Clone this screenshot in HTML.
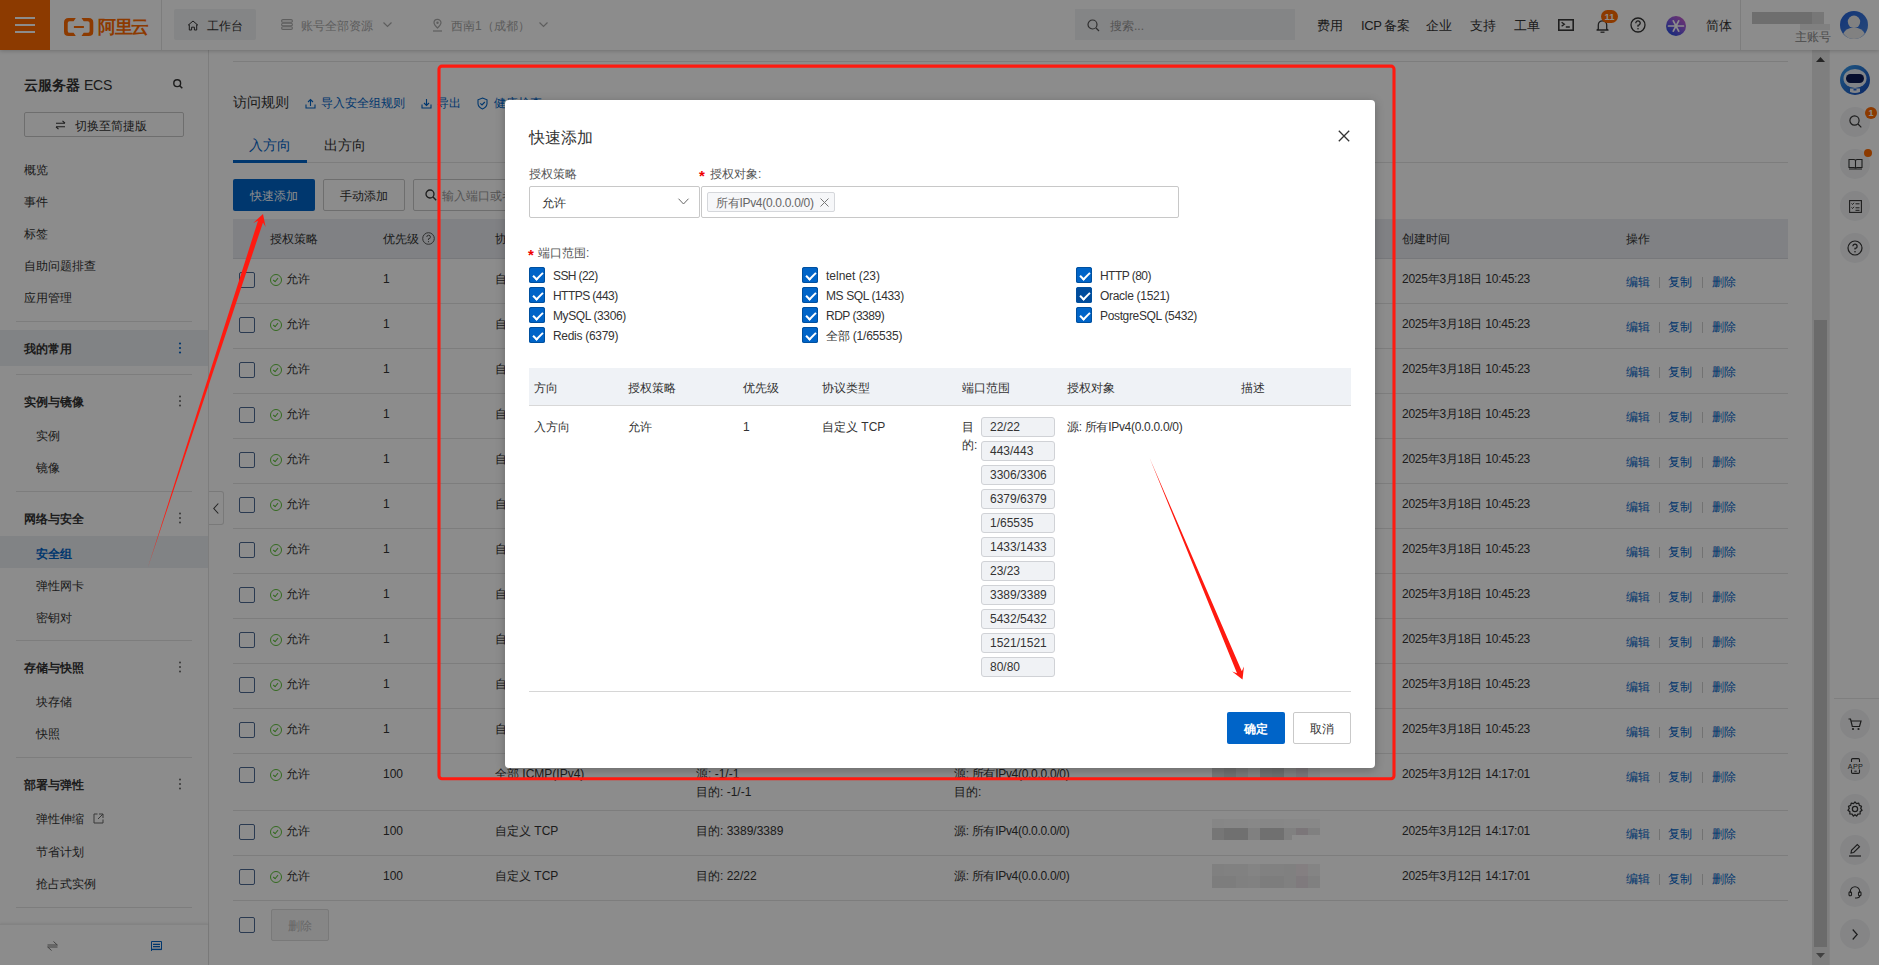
<!DOCTYPE html>
<html><head><meta charset="utf-8">
<style>
*{margin:0;padding:0;box-sizing:border-box}
html,body{width:1879px;height:965px;overflow:hidden;background:#fff;font-family:"Liberation Sans",sans-serif;font-size:12px;line-height:12px;color:#333;position:relative}
.a{position:absolute;white-space:nowrap}
.f13{font-size:13px;line-height:13px}
.f14{font-size:14px;line-height:14px}
.f16{font-size:16px;line-height:16px}
.b{font-weight:bold}
.m{font-weight:bold}
.blue{color:#0064c8}
.hl{position:absolute;height:1px;background:#e3e3e3}
.vl{position:absolute;width:1px;background:#e3e3e3}
svg{position:absolute;overflow:visible}
.cb{position:absolute;width:16px;height:16px;border:1px solid #4d6a94;border-radius:2px;background:#fff}
.ok{position:absolute;width:12px;height:12px;border:1.2px solid #5fc23a;border-radius:50%}
.ok:after{content:"";position:absolute;left:3.3px;top:2px;width:2.3px;height:4.3px;border:solid #5fc23a;border-width:0 1.1px 1.1px 0;transform:rotate(40deg)}
.rc{position:absolute;left:1840px;width:30px;height:30px;border-radius:50%;background:#f2f3f5}
#ov{position:absolute;z-index:3;left:0;top:0;width:1879px;height:965px;background:rgba(0,0,0,.45)}
#modal{position:absolute;z-index:4;left:505px;top:100px;width:870px;height:668px;background:#fff;border-radius:4px;box-shadow:0 2px 10px rgba(0,0,0,.25)}
.mcb{position:absolute;width:16px;height:16px;background:#0064c8;border-radius:2.5px;box-shadow:inset 0 0 0 1px #00509f}
.mcb:after{content:"";position:absolute;left:5.6px;top:2.6px;width:4px;height:8px;border:solid #fff;border-width:0 2px 2px 0;transform:rotate(45deg)}
.pt{position:absolute;left:476px;width:74px;height:20px;border:1px solid #d0d2d6;border-radius:3px;background:#f0f2f5;font-size:12px;line-height:19px;padding-left:8px;color:#333}
</style></head><body>

<!-- ============ TOP BAR ============ -->
<div id="top" class="a" style="left:0;top:0;width:1879px;height:50px;background:#fff;box-shadow:0 1px 4px rgba(0,0,0,.2);z-index:2">
  <div class="a" style="left:0;top:0;width:50px;height:50px;background:#ff6a00"></div>
  <div class="a" style="left:15px;top:17px;width:20px;height:2px;background:#fff"></div>
  <div class="a" style="left:15px;top:24px;width:20px;height:2px;background:#fff"></div>
  <div class="a" style="left:15px;top:31px;width:20px;height:2px;background:#fff"></div>
  <svg style="left:64px;top:18px" width="30" height="18" viewBox="0 0 30 18"><path d="M11.8,0 L4.6,0 Q0,0 0,4.6 L0,13.4 Q0,18 4.6,18 L11.8,18 L9.6,14.8 L5.6,14.8 Q3.7,14.8 3.7,12.9 L3.7,5.1 Q3.7,3.2 5.6,3.2 L9.6,3.2 Z" fill="#ff6a00"/><path d="M 17.5,0 L 24.7,0 Q 29.3,0 29.3,4.6 L 29.3,13.4 Q 29.3,18 24.7,18 L 17.5,18 L 19.7,14.8 L 23.7,14.8 Q 25.6,14.8 25.6,12.9 L 25.6,5.1 Q 25.6,3.2 23.7,3.2 L 19.7,3.2 Z" fill="#ff6a00"/><rect x="9.9" y="8" width="10" height="2" fill="#ff6a00"/></svg>
  <div class="a b" style="left:98px;top:18px;font-size:18px;line-height:18px;color:#ff6a00;letter-spacing:-1.3px">阿里云</div>
  <div class="vl" style="left:161px;top:0;height:50px"></div>
  <div class="a" style="left:174px;top:9px;width:82px;height:31px;background:#f1f2f4;border-radius:2px"></div>
  <svg style="left:187px;top:20px" width="12" height="11" viewBox="0 0 12 11"><path d="M1 5.3L6 1L11 5.3M2.3 4.5V10H4.6V7.2H7.4V10H9.7V4.5" fill="none" stroke="#333" stroke-width="1"/></svg>
  <div class="a" style="left:207px;top:20px;color:#333">工作台</div>
  <svg style="left:281px;top:19px" width="12" height="11" viewBox="0 0 12 11"><rect x=".6" y=".6" width="10.8" height="2.6" rx="1.3" fill="none" stroke="#acacac" stroke-width="1.1"/><rect x=".6" y="4.2" width="10.8" height="2.6" rx="1.3" fill="none" stroke="#acacac" stroke-width="1.1"/><rect x=".6" y="7.8" width="10.8" height="2.6" rx="1.3" fill="none" stroke="#acacac" stroke-width="1.1"/></svg>
  <div class="a" style="left:301px;top:20px;color:#a9a9a9">账号全部资源</div>
  <svg style="left:383px;top:22px" width="9" height="6" viewBox="0 0 9 6"><path d="M.5.5L4.5 4.5L8.5.5" fill="none" stroke="#acacac" stroke-width="1.2"/></svg>
  <svg style="left:432px;top:19px" width="11" height="13" viewBox="0 0 11 13"><path d="M5.5 9C3 6.5 2 5 2 3.8A3.5 3.5 0 0 1 9 3.8C9 5 8 6.5 5.5 9Z" fill="none" stroke="#acacac" stroke-width="1.2"/><circle cx="5.5" cy="3.8" r="1.2" fill="#acacac"/><path d="M1 12h9" stroke="#acacac" stroke-width="1.2"/></svg>
  <div class="a" style="left:451px;top:20px;color:#a9a9a9">西南1（成都）</div>
  <svg style="left:539px;top:22px" width="9" height="6" viewBox="0 0 9 6"><path d="M.5.5L4.5 4.5L8.5.5" fill="none" stroke="#acacac" stroke-width="1.2"/></svg>

  <div class="a" style="left:1075px;top:9px;width:220px;height:31px;background:#f1f2f4"></div>
  <svg style="left:1087px;top:19px" width="13" height="13" viewBox="0 0 13 13"><circle cx="5.5" cy="5.5" r="4.5" fill="none" stroke="#555" stroke-width="1.2"/><path d="M9 9l3 3" stroke="#555" stroke-width="1.2"/></svg>
  <div class="a" style="left:1110px;top:20px;color:#999">搜索...</div>

  <div class="a f13" style="left:1317px;top:19px">费用</div>
  <div class="a f13" style="left:1361px;top:19px;letter-spacing:-.4px">ICP 备案</div>
  <div class="a f13" style="left:1426px;top:19px">企业</div>
  <div class="a f13" style="left:1470px;top:19px">支持</div>
  <div class="a f13" style="left:1514px;top:19px">工单</div>
  <svg style="left:1558px;top:19px" width="16" height="12" viewBox="0 0 16 12"><rect x=".8" y=".8" width="14.4" height="10.4" fill="none" stroke="#3a3a3a" stroke-width="1.6"/><path d="M3.6 3.3L6.3 5.3L3.6 7.3M7.8 8H11.8" fill="none" stroke="#3a3a3a" stroke-width="1.4"/></svg>
  <svg style="left:1596px;top:17px" width="13" height="17" viewBox="0 0 13 17"><path d="M2.3 12V8A4.2 4.2 0 0 1 10.7 8V12L12 13H1Z" fill="none" stroke="#3a3a3a" stroke-width="1.3" stroke-linejoin="round"/><path d="M4.5 15.2H8.5" stroke="#3a3a3a" stroke-width="1.3"/></svg>
  <div class="a" style="left:1601px;top:9.5px;width:17px;height:13px;border-radius:7px;background:#ff6a00;color:#fff;font-size:9.5px;line-height:13px;text-align:center;font-weight:bold">11</div>
  <svg style="left:1630px;top:17px" width="16" height="16" viewBox="0 0 16 16"><circle cx="8" cy="8" r="7" fill="none" stroke="#333" stroke-width="1.3"/><path d="M5.8 6.2A2.2 2.2 0 1 1 8 8.3V9.8" fill="none" stroke="#333" stroke-width="1.3"/><circle cx="8" cy="11.8" r=".8" fill="#333"/></svg>
  <svg style="left:1666px;top:16px" width="20" height="20" viewBox="0 0 20 20"><defs><linearGradient id="pg" x1="1" y1="0" x2="0.2" y2="1"><stop offset="0" stop-color="#d45cc8"/><stop offset=".5" stop-color="#8a5ae0"/><stop offset="1" stop-color="#1f4be0"/></linearGradient></defs><circle cx="10" cy="10" r="10" fill="url(#pg)"/><path d="M2.5 10H17.5M7.3 4.8L12.7 15.2M12.7 4.8L7.3 15.2" stroke="#fff" stroke-width="1.7" stroke-linecap="round"/></svg>
  <div class="a f13" style="left:1706px;top:19px">简体</div>
  <div class="vl" style="left:1740px;top:0;height:50px"></div>
  <div class="a" style="left:1752px;top:12px;width:60px;height:12px;background:#c9c9c9"></div><div class="a" style="left:1812px;top:12px;width:12px;height:12px;background:#d9d9d9"></div><div class="a" style="left:1800px;top:24px;width:30px;height:6px;background:#eaeaea"></div>
  
  <div class="a" style="left:1795px;top:31px;color:#888">主账号</div>
  <svg style="left:1840px;top:11px" width="28" height="28" viewBox="0 0 28 28"><defs><linearGradient id="av" x1="0" y1="0" x2="1" y2="1"><stop offset="0" stop-color="#2160d8"/><stop offset="1" stop-color="#4a86e0"/></linearGradient></defs><circle cx="14" cy="14" r="14" fill="url(#av)"/><circle cx="14" cy="10.8" r="6.2" fill="#ececec"/><path d="M3.3 22.5Q6 16.8 14 16.8Q22 16.8 24.7 22.5Q20.5 28 14 28Q7.5 28 3.3 22.5Z" fill="#ececec"/></svg>
</div>

<!-- ============ SIDEBAR ============ -->
<div id="side" class="a" style="left:0;top:50px;width:209px;height:915px;background:#fff;border-right:1px solid #e3e3e3"></div>
<div class="a f14" style="left:24px;top:78px;"><span class="m">云服务器</span> <span style="letter-spacing:-.2px">ECS</span></div>
<svg style="left:173px;top:79px" width="10" height="10" viewBox="0 0 10 10"><circle cx="4.2" cy="4.2" r="3.4" fill="none" stroke="#333" stroke-width="1.4"/><path d="M6.7 6.7L9.3 9.3" stroke="#333" stroke-width="1.5"/></svg>
<div class="a" style="left:24px;top:112px;width:160px;height:25px;border:1px solid #c9c9c9;border-radius:2px"></div>
<svg style="left:55px;top:120px" width="11" height="10" viewBox="0 0 11 10"><path d="M1 3.2H10M7.5 .8L10 3.2M10 6.8H1M3.5 9.2L1 6.8" fill="none" stroke="#333" stroke-width="1.1"/></svg>
<div class="a " style="left:75px;top:120px;">切换至简捷版</div>
<div class="a " style="left:24px;top:164px;">概览</div>
<div class="a " style="left:24px;top:196px;">事件</div>
<div class="a " style="left:24px;top:228px;">标签</div>
<div class="a " style="left:24px;top:260px;">自助问题排查</div>
<div class="a " style="left:24px;top:292px;">应用管理</div>
<div class="hl" style="left:16px;top:321px;width:176px"></div>
<div class="hl" style="left:16px;top:374px;width:176px"></div>
<div class="hl" style="left:16px;top:491px;width:176px"></div>
<div class="hl" style="left:16px;top:640px;width:176px"></div>
<div class="hl" style="left:16px;top:757px;width:176px"></div>
<div class="hl" style="left:16px;top:907px;width:176px"></div>
<div class="a" style="left:0;top:330px;width:208px;height:36px;background:#eceef2"></div>
<div class="a" style="left:0;top:536px;width:208px;height:32px;background:#eceef2"></div>
<div class="a m" style="left:24px;top:343px;">我的常用</div>
<svg style="left:178px;top:342px" width="4" height="12" viewBox="0 0 4 12"><circle cx="2" cy="1.5" r="1.1" fill="#0064c8"/><circle cx="2" cy="6" r="1.1" fill="#0064c8"/><circle cx="2" cy="10.5" r="1.1" fill="#0064c8"/></svg>
<div class="a m" style="left:24px;top:396px;">实例与镜像</div>
<svg style="left:178px;top:395px" width="4" height="12" viewBox="0 0 4 12"><circle cx="2" cy="1.5" r="1" fill="#666"/><circle cx="2" cy="6" r="1" fill="#666"/><circle cx="2" cy="10.5" r="1" fill="#666"/></svg>
<div class="a " style="left:36px;top:430px;">实例</div>
<div class="a " style="left:36px;top:462px;">镜像</div>
<div class="a m" style="left:24px;top:513px;">网络与安全</div>
<svg style="left:178px;top:512px" width="4" height="12" viewBox="0 0 4 12"><circle cx="2" cy="1.5" r="1" fill="#666"/><circle cx="2" cy="6" r="1" fill="#666"/><circle cx="2" cy="10.5" r="1" fill="#666"/></svg>
<div class="a m blue" style="left:36px;top:548px;">安全组</div>
<div class="a " style="left:36px;top:580px;">弹性网卡</div>
<div class="a " style="left:36px;top:612px;">密钥对</div>
<div class="a m" style="left:24px;top:662px;">存储与快照</div>
<svg style="left:178px;top:661px" width="4" height="12" viewBox="0 0 4 12"><circle cx="2" cy="1.5" r="1" fill="#666"/><circle cx="2" cy="6" r="1" fill="#666"/><circle cx="2" cy="10.5" r="1" fill="#666"/></svg>
<div class="a " style="left:36px;top:696px;">块存储</div>
<div class="a " style="left:36px;top:728px;">快照</div>
<div class="a m" style="left:24px;top:779px;">部署与弹性</div>
<svg style="left:178px;top:778px" width="4" height="12" viewBox="0 0 4 12"><circle cx="2" cy="1.5" r="1" fill="#666"/><circle cx="2" cy="6" r="1" fill="#666"/><circle cx="2" cy="10.5" r="1" fill="#666"/></svg>
<div class="a " style="left:36px;top:813px;">弹性伸缩</div>
<svg style="left:93px;top:813px" width="11" height="11" viewBox="0 0 11 11"><path d="M4.5 1H1V10H10V6.5M6 1H10V5M10 1L5 6" fill="none" stroke="#666" stroke-width="1"/></svg>
<div class="a " style="left:36px;top:846px;">节省计划</div>
<div class="a " style="left:36px;top:878px;">抢占式实例</div>
<div class="a" style="left:0;top:924px;width:208px;height:41px;background:#fff;box-shadow:0 -1px 2px rgba(0,0,0,.08);border-top:1px solid #eee"></div>
<svg style="left:47px;top:941px" width="11" height="10" viewBox="0 0 11 10"><path d="M.5 4H10.5M6.5 .5L10.3 4M10.5 6H.5M4.5 9.5L.7 6" fill="none" stroke="#777" stroke-width="1"/></svg>
<svg style="left:151px;top:941px" width="11" height="10" viewBox="0 0 11 10"><path d="M.5 10V.5H10.5V8.6H1" fill="none" stroke="#0064c8" stroke-width="1"/><path d="M2 3.4H9M2 5.6H9M1 8.3H10.5" stroke="#0064c8" stroke-width="1.2"/></svg>
<div class="a" style="left:209px;top:491px;width:15px;height:34px;background:#fff;border:1px solid #dcdcdc;border-left:none;border-radius:0 3px 3px 0"></div>
<svg style="left:213px;top:503px" width="6" height="11" viewBox="0 0 6 11"><path d="M5.3.5L.8 5.5L5.3 10.5" fill="none" stroke="#444" stroke-width="1.1"/></svg>

<!-- ============ MAIN ============ -->
<div class="hl" style="left:233px;top:61px;width:1555px"></div>
<div class="a f14" style="left:233px;top:95px;">访问规则</div>
<svg style="left:305px;top:98px" width="11" height="11" viewBox="0 0 11 11"><path d="M1 6.5V10H10V6.5M5.5 8V1.5M3 4L5.5 1.5L8 4" fill="none" stroke="#0064c8" stroke-width="1.1"/></svg>
<div class="a blue" style="left:321px;top:97px;">导入安全组规则</div>
<svg style="left:421px;top:98px" width="11" height="11" viewBox="0 0 11 11"><path d="M1 6.5V10H10V6.5M5.5 1V7.5M3 5L5.5 7.5L8 5" fill="none" stroke="#0064c8" stroke-width="1.1"/></svg>
<div class="a blue" style="left:437px;top:97px;">导出</div>
<svg style="left:477px;top:97px" width="11" height="13" viewBox="0 0 11 13"><path d="M5.5 1L10 2.8V6.5Q10 10 5.5 12Q1 10 1 6.5V2.8Z" fill="none" stroke="#0064c8" stroke-width="1.1"/><path d="M3.3 6.3L5 8L7.8 5" fill="none" stroke="#0064c8" stroke-width="1.1"/></svg>
<div class="a blue" style="left:494px;top:97px;">健康检查</div>
<div class="a f14 blue" style="left:249px;top:138px;">入方向</div>
<div class="a f14" style="left:324px;top:138px;">出方向</div>
<div class="hl" style="left:233px;top:162px;width:1555px"></div>
<div class="a" style="left:233px;top:160px;width:74px;height:3px;background:#0064c8"></div>
<div class="a" style="left:233px;top:179px;width:82px;height:32px;background:#0064c8;border-radius:2px"></div>
<div class="a " style="left:250px;top:190px;color:#fff">快速添加</div>
<div class="a" style="left:323px;top:179px;width:82px;height:32px;border:1px solid #c9c9c9;border-radius:2px"></div>
<div class="a " style="left:340px;top:190px;">手动添加</div>
<div class="a" style="left:413px;top:179px;width:300px;height:32px;border:1px solid #c9c9c9;border-radius:2px"></div>
<svg style="left:425px;top:189px" width="12" height="12" viewBox="0 0 12 12"><circle cx="5" cy="5" r="4" fill="none" stroke="#333" stroke-width="1.3"/><path d="M8 8l3.2 3.2" stroke="#333" stroke-width="1.4"/></svg>
<div class="a " style="left:442px;top:190px;color:#999">输入端口或者授权对象进行搜索</div>
<div class="a" style="left:233px;top:219px;width:1555px;height:40px;background:#e9ecf1;border-bottom:1px solid #d9dbe0"></div>
<div class="a " style="left:270px;top:233px;">授权策略</div>
<div class="a " style="left:383px;top:233px;">优先级</div>
<svg style="left:422px;top:232px" width="13" height="13" viewBox="0 0 13 13"><circle cx="6.5" cy="6.5" r="5.8" fill="none" stroke="#555" stroke-width="1"/><path d="M4.8 5A1.8 1.8 0 1 1 6.5 6.8V8" fill="none" stroke="#555" stroke-width="1"/><circle cx="6.5" cy="9.7" r=".6" fill="#555"/></svg>
<div class="a " style="left:495px;top:233px;">协议类型</div>
<div class="a " style="left:696px;top:233px;">端口范围</div>
<div class="a " style="left:954px;top:233px;">授权对象</div>
<div class="a " style="left:1212px;top:233px;">描述</div>
<div class="a " style="left:1402px;top:233px;">创建时间</div>
<div class="a " style="left:1626px;top:233px;">操作</div>
<div class="hl" style="left:233px;top:303px;width:1555px"></div>
<div class="cb" style="left:239px;top:272px"></div>
<div class="ok" style="left:270px;top:274px"></div>
<div class="a " style="left:286px;top:273px;">允许</div>
<div class="a " style="left:383px;top:273px;">1</div>
<div class="a " style="left:495px;top:273px;">自定义 TCP</div>
<div class="a " style="left:1402px;top:273px;letter-spacing:-.25px">2025年3月18日 10:45:23</div>
<div class="a blue" style="left:1626px;top:276px">编辑</div><div class="a" style="left:1659px;top:277px;width:1px;height:11px;background:#d0d0d0"></div><div class="a blue" style="left:1668px;top:276px">复制</div><div class="a" style="left:1702px;top:277px;width:1px;height:11px;background:#d0d0d0"></div><div class="a blue" style="left:1712px;top:276px">删除</div>
<div class="hl" style="left:233px;top:348px;width:1555px"></div>
<div class="cb" style="left:239px;top:317px"></div>
<div class="ok" style="left:270px;top:319px"></div>
<div class="a " style="left:286px;top:318px;">允许</div>
<div class="a " style="left:383px;top:318px;">1</div>
<div class="a " style="left:495px;top:318px;">自定义 TCP</div>
<div class="a " style="left:1402px;top:318px;letter-spacing:-.25px">2025年3月18日 10:45:23</div>
<div class="a blue" style="left:1626px;top:321px">编辑</div><div class="a" style="left:1659px;top:322px;width:1px;height:11px;background:#d0d0d0"></div><div class="a blue" style="left:1668px;top:321px">复制</div><div class="a" style="left:1702px;top:322px;width:1px;height:11px;background:#d0d0d0"></div><div class="a blue" style="left:1712px;top:321px">删除</div>
<div class="hl" style="left:233px;top:393px;width:1555px"></div>
<div class="cb" style="left:239px;top:362px"></div>
<div class="ok" style="left:270px;top:364px"></div>
<div class="a " style="left:286px;top:363px;">允许</div>
<div class="a " style="left:383px;top:363px;">1</div>
<div class="a " style="left:495px;top:363px;">自定义 TCP</div>
<div class="a " style="left:1402px;top:363px;letter-spacing:-.25px">2025年3月18日 10:45:23</div>
<div class="a blue" style="left:1626px;top:366px">编辑</div><div class="a" style="left:1659px;top:367px;width:1px;height:11px;background:#d0d0d0"></div><div class="a blue" style="left:1668px;top:366px">复制</div><div class="a" style="left:1702px;top:367px;width:1px;height:11px;background:#d0d0d0"></div><div class="a blue" style="left:1712px;top:366px">删除</div>
<div class="hl" style="left:233px;top:438px;width:1555px"></div>
<div class="cb" style="left:239px;top:407px"></div>
<div class="ok" style="left:270px;top:409px"></div>
<div class="a " style="left:286px;top:408px;">允许</div>
<div class="a " style="left:383px;top:408px;">1</div>
<div class="a " style="left:495px;top:408px;">自定义 TCP</div>
<div class="a " style="left:1402px;top:408px;letter-spacing:-.25px">2025年3月18日 10:45:23</div>
<div class="a blue" style="left:1626px;top:411px">编辑</div><div class="a" style="left:1659px;top:412px;width:1px;height:11px;background:#d0d0d0"></div><div class="a blue" style="left:1668px;top:411px">复制</div><div class="a" style="left:1702px;top:412px;width:1px;height:11px;background:#d0d0d0"></div><div class="a blue" style="left:1712px;top:411px">删除</div>
<div class="hl" style="left:233px;top:483px;width:1555px"></div>
<div class="cb" style="left:239px;top:452px"></div>
<div class="ok" style="left:270px;top:454px"></div>
<div class="a " style="left:286px;top:453px;">允许</div>
<div class="a " style="left:383px;top:453px;">1</div>
<div class="a " style="left:495px;top:453px;">自定义 TCP</div>
<div class="a " style="left:1402px;top:453px;letter-spacing:-.25px">2025年3月18日 10:45:23</div>
<div class="a blue" style="left:1626px;top:456px">编辑</div><div class="a" style="left:1659px;top:457px;width:1px;height:11px;background:#d0d0d0"></div><div class="a blue" style="left:1668px;top:456px">复制</div><div class="a" style="left:1702px;top:457px;width:1px;height:11px;background:#d0d0d0"></div><div class="a blue" style="left:1712px;top:456px">删除</div>
<div class="hl" style="left:233px;top:528px;width:1555px"></div>
<div class="cb" style="left:239px;top:497px"></div>
<div class="ok" style="left:270px;top:499px"></div>
<div class="a " style="left:286px;top:498px;">允许</div>
<div class="a " style="left:383px;top:498px;">1</div>
<div class="a " style="left:495px;top:498px;">自定义 TCP</div>
<div class="a " style="left:1402px;top:498px;letter-spacing:-.25px">2025年3月18日 10:45:23</div>
<div class="a blue" style="left:1626px;top:501px">编辑</div><div class="a" style="left:1659px;top:502px;width:1px;height:11px;background:#d0d0d0"></div><div class="a blue" style="left:1668px;top:501px">复制</div><div class="a" style="left:1702px;top:502px;width:1px;height:11px;background:#d0d0d0"></div><div class="a blue" style="left:1712px;top:501px">删除</div>
<div class="hl" style="left:233px;top:573px;width:1555px"></div>
<div class="cb" style="left:239px;top:542px"></div>
<div class="ok" style="left:270px;top:544px"></div>
<div class="a " style="left:286px;top:543px;">允许</div>
<div class="a " style="left:383px;top:543px;">1</div>
<div class="a " style="left:495px;top:543px;">自定义 TCP</div>
<div class="a " style="left:1402px;top:543px;letter-spacing:-.25px">2025年3月18日 10:45:23</div>
<div class="a blue" style="left:1626px;top:546px">编辑</div><div class="a" style="left:1659px;top:547px;width:1px;height:11px;background:#d0d0d0"></div><div class="a blue" style="left:1668px;top:546px">复制</div><div class="a" style="left:1702px;top:547px;width:1px;height:11px;background:#d0d0d0"></div><div class="a blue" style="left:1712px;top:546px">删除</div>
<div class="hl" style="left:233px;top:618px;width:1555px"></div>
<div class="cb" style="left:239px;top:587px"></div>
<div class="ok" style="left:270px;top:589px"></div>
<div class="a " style="left:286px;top:588px;">允许</div>
<div class="a " style="left:383px;top:588px;">1</div>
<div class="a " style="left:495px;top:588px;">自定义 TCP</div>
<div class="a " style="left:1402px;top:588px;letter-spacing:-.25px">2025年3月18日 10:45:23</div>
<div class="a blue" style="left:1626px;top:591px">编辑</div><div class="a" style="left:1659px;top:592px;width:1px;height:11px;background:#d0d0d0"></div><div class="a blue" style="left:1668px;top:591px">复制</div><div class="a" style="left:1702px;top:592px;width:1px;height:11px;background:#d0d0d0"></div><div class="a blue" style="left:1712px;top:591px">删除</div>
<div class="hl" style="left:233px;top:663px;width:1555px"></div>
<div class="cb" style="left:239px;top:632px"></div>
<div class="ok" style="left:270px;top:634px"></div>
<div class="a " style="left:286px;top:633px;">允许</div>
<div class="a " style="left:383px;top:633px;">1</div>
<div class="a " style="left:495px;top:633px;">自定义 TCP</div>
<div class="a " style="left:1402px;top:633px;letter-spacing:-.25px">2025年3月18日 10:45:23</div>
<div class="a blue" style="left:1626px;top:636px">编辑</div><div class="a" style="left:1659px;top:637px;width:1px;height:11px;background:#d0d0d0"></div><div class="a blue" style="left:1668px;top:636px">复制</div><div class="a" style="left:1702px;top:637px;width:1px;height:11px;background:#d0d0d0"></div><div class="a blue" style="left:1712px;top:636px">删除</div>
<div class="hl" style="left:233px;top:708px;width:1555px"></div>
<div class="cb" style="left:239px;top:677px"></div>
<div class="ok" style="left:270px;top:679px"></div>
<div class="a " style="left:286px;top:678px;">允许</div>
<div class="a " style="left:383px;top:678px;">1</div>
<div class="a " style="left:495px;top:678px;">自定义 TCP</div>
<div class="a " style="left:1402px;top:678px;letter-spacing:-.25px">2025年3月18日 10:45:23</div>
<div class="a blue" style="left:1626px;top:681px">编辑</div><div class="a" style="left:1659px;top:682px;width:1px;height:11px;background:#d0d0d0"></div><div class="a blue" style="left:1668px;top:681px">复制</div><div class="a" style="left:1702px;top:682px;width:1px;height:11px;background:#d0d0d0"></div><div class="a blue" style="left:1712px;top:681px">删除</div>
<div class="hl" style="left:233px;top:753px;width:1555px"></div>
<div class="cb" style="left:239px;top:722px"></div>
<div class="ok" style="left:270px;top:724px"></div>
<div class="a " style="left:286px;top:723px;">允许</div>
<div class="a " style="left:383px;top:723px;">1</div>
<div class="a " style="left:495px;top:723px;">自定义 TCP</div>
<div class="a " style="left:1402px;top:723px;letter-spacing:-.25px">2025年3月18日 10:45:23</div>
<div class="a blue" style="left:1626px;top:726px">编辑</div><div class="a" style="left:1659px;top:727px;width:1px;height:11px;background:#d0d0d0"></div><div class="a blue" style="left:1668px;top:726px">复制</div><div class="a" style="left:1702px;top:727px;width:1px;height:11px;background:#d0d0d0"></div><div class="a blue" style="left:1712px;top:726px">删除</div>
<div class="hl" style="left:233px;top:810px;width:1555px"></div>
<div class="cb" style="left:239px;top:767px"></div>
<div class="ok" style="left:270px;top:769px"></div>
<div class="a " style="left:286px;top:768px;">允许</div>
<div class="a " style="left:383px;top:768px;">100</div>
<div class="a " style="left:495px;top:768px;">全部 ICMP(IPv4)</div>
<div class="a " style="left:696px;top:768px;">源: -1/-1</div>
<div class="a " style="left:696px;top:786px;">目的: -1/-1</div>
<div class="a " style="left:954px;top:768px;letter-spacing:-.3px">源: 所有IPv4(0.0.0.0/0)</div>
<div class="a " style="left:954px;top:786px;">目的:</div>
<div class="a " style="left:1402px;top:768px;letter-spacing:-.25px">2025年3月12日 14:17:01</div>
<div class="a blue" style="left:1626px;top:771px">编辑</div><div class="a" style="left:1659px;top:772px;width:1px;height:11px;background:#d0d0d0"></div><div class="a blue" style="left:1668px;top:771px">复制</div><div class="a" style="left:1702px;top:772px;width:1px;height:11px;background:#d0d0d0"></div><div class="a blue" style="left:1712px;top:771px">删除</div>
<div class="a" style="left:1212px;top:765px;width:12px;height:13px;background:rgb(215,215,215)"></div><div class="a" style="left:1224px;top:765px;width:12px;height:13px;background:rgb(204,204,204)"></div><div class="a" style="left:1236px;top:765px;width:12px;height:13px;background:rgb(218,218,218)"></div><div class="a" style="left:1248px;top:765px;width:12px;height:13px;background:rgb(236,236,236)"></div><div class="a" style="left:1260px;top:765px;width:12px;height:13px;background:rgb(204,204,204)"></div><div class="a" style="left:1272px;top:765px;width:12px;height:13px;background:rgb(200,200,200)"></div><div class="a" style="left:1284px;top:765px;width:12px;height:13px;background:rgb(227,227,227)"></div><div class="a" style="left:1296px;top:765px;width:12px;height:13px;background:rgb(222,214,218)"></div><div class="a" style="left:1308px;top:765px;width:12px;height:13px;background:rgb(245,245,245)"></div><div class="a" style="left:1212px;top:819px;width:12px;height:9px;background:rgb(245,245,245)"></div><div class="a" style="left:1224px;top:819px;width:12px;height:9px;background:rgb(246,246,246)"></div><div class="a" style="left:1236px;top:819px;width:12px;height:9px;background:rgb(246,246,246)"></div><div class="a" style="left:1248px;top:819px;width:12px;height:9px;background:rgb(247,247,247)"></div><div class="a" style="left:1260px;top:819px;width:12px;height:9px;background:rgb(246,246,246)"></div><div class="a" style="left:1272px;top:819px;width:12px;height:9px;background:rgb(246,246,246)"></div><div class="a" style="left:1284px;top:819px;width:12px;height:9px;background:rgb(247,247,247)"></div><div class="a" style="left:1296px;top:819px;width:12px;height:9px;background:rgb(247,247,247)"></div><div class="a" style="left:1308px;top:819px;width:12px;height:9px;background:rgb(248,248,248)"></div><div class="a" style="left:1212px;top:828px;width:12px;height:12px;background:rgb(215,215,215)"></div><div class="a" style="left:1224px;top:828px;width:12px;height:12px;background:rgb(205,205,205)"></div><div class="a" style="left:1236px;top:828px;width:12px;height:12px;background:rgb(205,205,205)"></div><div class="a" style="left:1248px;top:828px;width:12px;height:12px;background:rgb(233,233,233)"></div><div class="a" style="left:1260px;top:828px;width:12px;height:12px;background:rgb(205,205,205)"></div><div class="a" style="left:1272px;top:828px;width:12px;height:12px;background:rgb(204,204,204)"></div><div class="a" style="left:1284px;top:828px;width:12px;height:12px;background:rgb(233,233,233)"></div><div class="a" style="left:1292px;top:835px;width:6px;height:5px;background:#fff"></div><div class="a" style="left:1296px;top:828px;width:12px;height:7px;background:rgb(224,216,220)"></div><div class="a" style="left:1308px;top:828px;width:12px;height:7px;background:rgb(233,233,233)"></div><div class="a" style="left:1212px;top:864px;width:12px;height:12px;background:rgb(233,233,233)"></div><div class="a" style="left:1224px;top:864px;width:12px;height:12px;background:rgb(236,236,236)"></div><div class="a" style="left:1236px;top:864px;width:12px;height:12px;background:rgb(236,236,236)"></div><div class="a" style="left:1248px;top:864px;width:12px;height:12px;background:rgb(240,240,240)"></div><div class="a" style="left:1260px;top:864px;width:12px;height:12px;background:rgb(236,236,236)"></div><div class="a" style="left:1272px;top:864px;width:12px;height:12px;background:rgb(236,236,236)"></div><div class="a" style="left:1284px;top:864px;width:12px;height:12px;background:rgb(233,233,233)"></div><div class="a" style="left:1296px;top:864px;width:12px;height:12px;background:rgb(240,232,236)"></div><div class="a" style="left:1308px;top:864px;width:12px;height:12px;background:rgb(240,240,240)"></div><div class="a" style="left:1212px;top:876px;width:12px;height:12px;background:rgb(227,227,227)"></div><div class="a" style="left:1224px;top:876px;width:12px;height:12px;background:rgb(227,227,227)"></div><div class="a" style="left:1236px;top:876px;width:12px;height:12px;background:rgb(233,233,233)"></div><div class="a" style="left:1248px;top:876px;width:12px;height:12px;background:rgb(236,236,236)"></div><div class="a" style="left:1260px;top:876px;width:12px;height:12px;background:rgb(227,227,227)"></div><div class="a" style="left:1272px;top:876px;width:12px;height:12px;background:rgb(227,227,227)"></div><div class="a" style="left:1284px;top:876px;width:12px;height:12px;background:rgb(233,233,233)"></div><div class="a" style="left:1296px;top:876px;width:12px;height:12px;background:rgb(231,223,227)"></div><div class="a" style="left:1308px;top:876px;width:12px;height:12px;background:rgb(233,233,233)"></div>
<div class="hl" style="left:233px;top:855px;width:1555px"></div>
<div class="cb" style="left:239px;top:824px"></div>
<div class="ok" style="left:270px;top:826px"></div>
<div class="a " style="left:286px;top:825px;">允许</div>
<div class="a " style="left:383px;top:825px;">100</div>
<div class="a " style="left:495px;top:825px;">自定义 TCP</div>
<div class="a " style="left:696px;top:825px;">目的: 3389/3389</div>
<div class="a " style="left:954px;top:825px;letter-spacing:-.3px">源: 所有IPv4(0.0.0.0/0)</div>
<div class="a " style="left:1402px;top:825px;letter-spacing:-.25px">2025年3月12日 14:17:01</div>
<div class="a blue" style="left:1626px;top:828px">编辑</div><div class="a" style="left:1659px;top:829px;width:1px;height:11px;background:#d0d0d0"></div><div class="a blue" style="left:1668px;top:828px">复制</div><div class="a" style="left:1702px;top:829px;width:1px;height:11px;background:#d0d0d0"></div><div class="a blue" style="left:1712px;top:828px">删除</div>
<div class="hl" style="left:233px;top:900px;width:1555px"></div>
<div class="cb" style="left:239px;top:869px"></div>
<div class="ok" style="left:270px;top:871px"></div>
<div class="a " style="left:286px;top:870px;">允许</div>
<div class="a " style="left:383px;top:870px;">100</div>
<div class="a " style="left:495px;top:870px;">自定义 TCP</div>
<div class="a " style="left:696px;top:870px;">目的: 22/22</div>
<div class="a " style="left:954px;top:870px;letter-spacing:-.3px">源: 所有IPv4(0.0.0.0/0)</div>
<div class="a " style="left:1402px;top:870px;letter-spacing:-.25px">2025年3月12日 14:17:01</div>
<div class="a blue" style="left:1626px;top:873px">编辑</div><div class="a" style="left:1659px;top:874px;width:1px;height:11px;background:#d0d0d0"></div><div class="a blue" style="left:1668px;top:873px">复制</div><div class="a" style="left:1702px;top:874px;width:1px;height:11px;background:#d0d0d0"></div><div class="a blue" style="left:1712px;top:873px">删除</div>


<div class="cb" style="left:239px;top:917px"></div>
<div class="a" style="left:271px;top:909px;width:58px;height:32px;border:1px solid #dcdcdc;background:#f5f5f5;border-radius:2px"></div>
<div class="a " style="left:288px;top:920px;color:#bbb">删除</div>

<!-- ============ RIGHT COL ============ -->
<div class="a" style="left:1812px;top:50px;width:17px;height:915px;background:#e8e8e8"></div>
<div class="a" style="left:1814px;top:320px;width:13px;height:627px;background:#c4c4c4"></div>
<svg style="left:1816px;top:57px" width="9" height="5" viewBox="0 0 9 5"><path d="M0 5L4.5 0L9 5Z" fill="#444"/></svg>
<svg style="left:1816px;top:953px" width="9" height="5" viewBox="0 0 9 5"><path d="M0 0L4.5 5L9 0Z" fill="#777"/></svg>
<div class="a" style="left:1829px;top:50px;width:50px;height:915px;background:#fff;border-left:1px solid #eee"></div>
<svg style="left:1840px;top:65px" width="30" height="30" viewBox="0 0 30 30"><defs><linearGradient id="rg" x1="0" y1="0" x2="1" y2="1"><stop offset="0" stop-color="#3aa0f0"/><stop offset="1" stop-color="#1546b5"/></linearGradient></defs><circle cx="15" cy="15" r="15" fill="url(#rg)"/><ellipse cx="15" cy="13.5" rx="11.5" ry="9.5" fill="#e9eef6"/><rect x="6" y="9" width="18" height="9" rx="4.5" fill="#0c1a55"/><path d="M10 23.5h10v3.5Q15 29 10 27Z" fill="#eef2f8"/><rect x="13.5" y="24" width="3" height="1.5" fill="#2a6ad8"/></svg>
<div class="rc" style="top:107px"></div>
<div class="rc" style="top:149px"></div>
<div class="rc" style="top:191px"></div>
<div class="rc" style="top:233px"></div>
<div class="rc" style="top:709px"></div>
<div class="rc" style="top:751px"></div>
<div class="rc" style="top:794px"></div>
<div class="rc" style="top:835px"></div>
<div class="rc" style="top:877px"></div>
<div class="rc" style="top:919px"></div>
<svg style="left:1849px;top:115px" width="13" height="13" viewBox="0 0 13 13"><circle cx="5.5" cy="5.5" r="4.6" fill="none" stroke="#333" stroke-width="1.2"/><path d="M9 9l3.3 3.3" stroke="#333" stroke-width="1.2"/></svg>
<div class="a" style="left:1865px;top:107px;width:12px;height:12px;border-radius:50%;background:#ff6a00;color:#fff;font-size:9px;line-height:12px;text-align:center;font-weight:bold">1</div>
<svg style="left:1848px;top:158px" width="15" height="12" viewBox="0 0 15 12"><path d="M1 1.5H6Q7.5 1.5 7.5 3V10.5Q7.5 9.5 6 9.5H1ZM14 1.5H9Q7.5 1.5 7.5 3V10.5Q7.5 9.5 9 9.5H14Z" fill="none" stroke="#333" stroke-width="1.1"/><path d="M1 11H14" stroke="#333" stroke-width="1"/></svg>
<div class="a" style="left:1864px;top:149px;width:8px;height:8px;border-radius:50%;background:#ff6a00"></div>
<svg style="left:1849px;top:200px" width="13" height="13" viewBox="0 0 13 13"><rect x=".6" y=".6" width="11.8" height="11.8" fill="none" stroke="#333" stroke-width="1.1"/><path d="M2.5 3.5L3.5 4.5L5 2.8M6.5 3.8H10.5M2.5 7.5L3.5 8.5L5 6.8M6.5 7.8H10.5M6.5 10.3H10.5" fill="none" stroke="#333" stroke-width="1"/></svg>
<svg style="left:1847px;top:240px" width="16" height="16" viewBox="0 0 16 16"><circle cx="8" cy="8" r="7" fill="none" stroke="#333" stroke-width="1.2"/><path d="M5.9 6.2A2.1 2.1 0 1 1 8 8.3V9.6" fill="none" stroke="#333" stroke-width="1.2"/><circle cx="8" cy="11.7" r=".8" fill="#333"/></svg>
<div class="hl" style="left:1834px;top:698px;width:45px;background:#e8e8e8"></div>
<svg style="left:1848px;top:718px" width="14" height="13" viewBox="0 0 14 13"><path d="M.5 1H2.5L4.3 8.5H11.5L13 3H3.3" fill="none" stroke="#333" stroke-width="1.2"/><circle cx="5" cy="11" r="1.1" fill="#333"/><circle cx="10.5" cy="11" r="1.1" fill="#333"/></svg>
<svg style="left:1848px;top:758px" width="15" height="16" viewBox="0 0 15 16"><path d="M3.5 4V1.8Q3.5 .6 4.7 .6H10.3Q11.5 .6 11.5 1.8V4M3.5 11.5V14.2Q3.5 15.4 4.7 15.4H10.3Q11.5 15.4 11.5 14.2V11.5" fill="none" stroke="#333" stroke-width="1.1"/><text x="7.5" y="10.8" font-size="7.2" text-anchor="middle" fill="#333" font-family="Liberation Sans" letter-spacing=".3">APP</text><path d="M6.3 13.2H8.7" stroke="#333" stroke-width="1"/></svg>
<svg style="left:1847px;top:801px" width="16" height="16" viewBox="0 0 14 14"><path d="M7 .8L8.3 2.3L10.3 1.9L10.8 3.9L12.7 4.6L12 6.5L13.2 8.1L11.5 9.3L11.5 11.3L9.5 11.5L8.4 13.2L7 12L5.6 13.2L4.5 11.5L2.5 11.3L2.5 9.3L.8 8.1L2 6.5L1.3 4.6L3.2 3.9L3.7 1.9L5.7 2.3Z" fill="none" stroke="#333" stroke-width="1.1" stroke-linejoin="round"/><circle cx="7" cy="7" r="2.3" fill="none" stroke="#333" stroke-width="1.1"/></svg>
<svg style="left:1848px;top:843px" width="14" height="14" viewBox="0 0 14 14"><path d="M3 10L3.5 7.3L9.3 1.5L11.5 3.7L5.7 9.5Z" fill="none" stroke="#333" stroke-width="1.1"/><path d="M1 13H13" stroke="#333" stroke-width="1.2"/></svg>
<svg style="left:1848px;top:885px" width="14" height="14" viewBox="0 0 14 14"><path d="M2.3 8V6.5A4.7 4.7 0 0 1 11.7 6.5V8" fill="none" stroke="#333" stroke-width="1.1"/><rect x="1" y="6.8" width="2.5" height="4" rx="1" fill="none" stroke="#333" stroke-width="1.1"/><rect x="10.5" y="6.8" width="2.5" height="4" rx="1" fill="none" stroke="#333" stroke-width="1.1"/><path d="M11.7 10.8Q11.7 13 8.5 13H7" fill="none" stroke="#333" stroke-width="1.1"/></svg>
<svg style="left:1852px;top:929px" width="6" height="11" viewBox="0 0 6 11"><path d="M.7.5L5.2 5.5L.7 10.5" fill="none" stroke="#333" stroke-width="1.2"/></svg>

<div id="ov"></div>

<!-- ============ MODAL ============ -->
<div id="modal">
<div class="a f16" style="left:24px;top:30px;">快速添加</div>
<svg style="left:833px;top:30px" width="12" height="12" viewBox="0 0 12 12"><path d="M.8.8L11.2 11.2M11.2.8L.8 11.2" stroke="#333" stroke-width="1.3"/></svg>
<div class="a " style="left:24px;top:68px;color:#555">授权策略</div>
<div class="a" style="left:24px;top:86px;width:171px;height:32px;border:1px solid #c8c8c8;border-radius:2px"></div>
<div class="a " style="left:37px;top:97px;">允许</div>
<svg style="left:173px;top:98px" width="11" height="7" viewBox="0 0 11 7"><path d="M.5.7L5.5 6L10.5.7" fill="none" stroke="#666" stroke-width="1"/></svg>
<div class="a b" style="left:194px;top:68px;color:#e00;font-size:15px;line-height:15px">*</div>
<div class="a " style="left:205px;top:68px;color:#555">授权对象:</div>
<div class="a" style="left:196px;top:86px;width:478px;height:32px;border:1px solid #c8c8c8;border-radius:2px"></div>
<div class="a" style="left:202px;top:92px;width:128px;height:20px;border:1px solid #d5d7db;border-radius:2px;background:#f6f7f9"></div>
<div class="a " style="left:211px;top:97px;color:#666;letter-spacing:-.3px">所有IPv4(0.0.0.0/0)</div>
<svg style="left:315px;top:98px" width="9" height="9" viewBox="0 0 9 9"><path d="M.5.5L8.5 8.5M8.5.5L.5 8.5" stroke="#777" stroke-width="1"/></svg>
<div class="a b" style="left:23px;top:147px;color:#e00;font-size:15px;line-height:15px">*</div>
<div class="a " style="left:33px;top:147px;color:#555">端口范围:</div>
<div class="mcb" style="left:24px;top:167px"></div>
<div class="a " style="left:48px;top:170px;letter-spacing:-0.6px">SSH (22)</div>
<div class="mcb" style="left:297px;top:167px"></div>
<div class="a " style="left:321px;top:170px;letter-spacing:0px">telnet (23)</div>
<div class="mcb" style="left:571px;top:167px"></div>
<div class="a " style="left:595px;top:170px;letter-spacing:-0.55px">HTTP (80)</div>
<div class="mcb" style="left:24px;top:187px"></div>
<div class="a " style="left:48px;top:190px;letter-spacing:-0.55px">HTTPS (443)</div>
<div class="mcb" style="left:297px;top:187px"></div>
<div class="a " style="left:321px;top:190px;letter-spacing:-0.4px">MS SQL (1433)</div>
<div class="mcb" style="left:571px;top:187px;background:#004c9c"></div>
<div class="a " style="left:595px;top:190px;letter-spacing:-0.3px">Oracle (1521)</div>
<div class="mcb" style="left:24px;top:207px"></div>
<div class="a " style="left:48px;top:210px;letter-spacing:-0.4px">MySQL (3306)</div>
<div class="mcb" style="left:297px;top:207px"></div>
<div class="a " style="left:321px;top:210px;letter-spacing:-0.5px">RDP (3389)</div>
<div class="mcb" style="left:571px;top:207px"></div>
<div class="a " style="left:595px;top:210px;letter-spacing:-0.35px">PostgreSQL (5432)</div>
<div class="mcb" style="left:24px;top:227px"></div>
<div class="a " style="left:48px;top:230px;letter-spacing:-0.3px">Redis (6379)</div>
<div class="mcb" style="left:297px;top:227px"></div>
<div class="a " style="left:321px;top:230px;letter-spacing:-0.2px">全部 (1/65535)</div>
<div class="a" style="left:24px;top:268px;width:822px;height:38px;background:#eff2f6;border-bottom:1px solid #d8d8d8"></div>
<div class="a " style="left:29px;top:282px;">方向</div>
<div class="a " style="left:123px;top:282px;">授权策略</div>
<div class="a " style="left:238px;top:282px;">优先级</div>
<div class="a " style="left:317px;top:282px;">协议类型</div>
<div class="a " style="left:457px;top:282px;">端口范围</div>
<div class="a " style="left:562px;top:282px;">授权对象</div>
<div class="a " style="left:736px;top:282px;">描述</div>
<div class="a " style="left:29px;top:321px;">入方向</div>
<div class="a " style="left:123px;top:321px;">允许</div>
<div class="a " style="left:238px;top:321px;">1</div>
<div class="a " style="left:317px;top:321px;">自定义 TCP</div>
<div class="a " style="left:457px;top:321px;">目</div>
<div class="a " style="left:562px;top:321px;letter-spacing:-.3px">源: 所有IPv4(0.0.0.0/0)</div>
<div class="a " style="left:457px;top:339px;">的:</div>
<div class="pt" style="top:317px">22/22</div>
<div class="pt" style="top:341px">443/443</div>
<div class="pt" style="top:365px">3306/3306</div>
<div class="pt" style="top:389px">6379/6379</div>
<div class="pt" style="top:413px">1/65535</div>
<div class="pt" style="top:437px">1433/1433</div>
<div class="pt" style="top:461px">23/23</div>
<div class="pt" style="top:485px">3389/3389</div>
<div class="pt" style="top:509px">5432/5432</div>
<div class="pt" style="top:533px">1521/1521</div>
<div class="pt" style="top:557px">80/80</div>
<div class="hl" style="left:24px;top:591px;width:822px;background:#d6d6d6"></div>
<div class="a" style="left:722px;top:612px;width:58px;height:32px;background:#0064c8;border-radius:2px"></div>
<div class="a b" style="left:739px;top:623px;color:#fff">确定</div>
<div class="a" style="left:788px;top:612px;width:58px;height:32px;border:1px solid #c9c9c9;border-radius:2px"></div>
<div class="a " style="left:805px;top:623px;">取消</div>
</div>

<!-- ============ ANNOTATIONS ============ -->
<svg id="ann" style="left:0;top:0;z-index:5" width="1879" height="965" viewBox="0 0 1879 965">
  <rect x="439" y="66.1" width="955" height="712.7" rx="3" fill="none" stroke="#ff1a10" stroke-width="3.1"/>
  <polygon points="148.0,567.0 258.0,220.8 253.3,222.9 263.0,214.0 265.6,226.9 263.0,222.4" fill="#ff1a10"/>
  <polygon points="1149.4,457.5 1241.8,671.2 1244.0,666.5 1242.5,679.6 1232.1,671.5 1237.0,673.2" fill="#ff1a10"/>
</svg>
</body></html>
